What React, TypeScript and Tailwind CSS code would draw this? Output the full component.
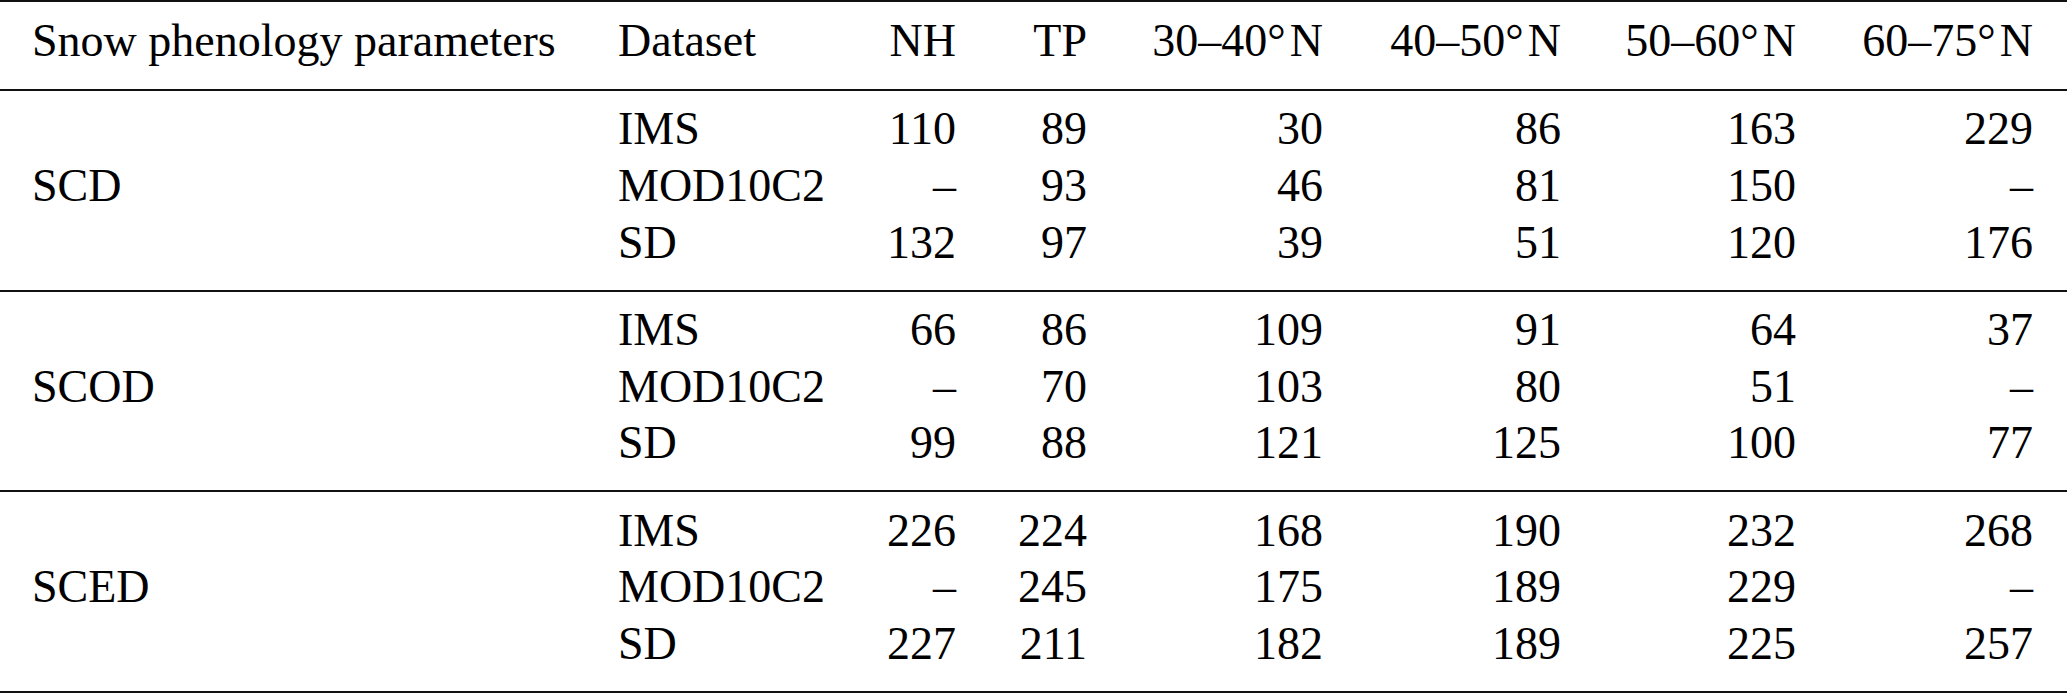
import { Fragment } from "react";

type Row = { ds: string; v: string[] };
type Section = { label: string; rows: Row[] };

const sections: Section[] = [
  {
    label: "SCD",
    rows: [
      { ds: "IMS", v: ["110", "89", "30", "86", "163", "229"] },
      { ds: "MOD10C2", v: ["–", "93", "46", "81", "150", "–"] },
      { ds: "SD", v: ["132", "97", "39", "51", "120", "176"] },
    ],
  },
  {
    label: "SCOD",
    rows: [
      { ds: "IMS", v: ["66", "86", "109", "91", "64", "37"] },
      { ds: "MOD10C2", v: ["–", "70", "103", "80", "51", "–"] },
      { ds: "SD", v: ["99", "88", "121", "125", "100", "77"] },
    ],
  },
  {
    label: "SCED",
    rows: [
      { ds: "IMS", v: ["226", "224", "168", "190", "232", "268"] },
      { ds: "MOD10C2", v: ["–", "245", "175", "189", "229", "–"] },
      { ds: "SD", v: ["227", "211", "182", "189", "225", "257"] },
    ],
  },
];

function Cell({ children, right, extra }: { children: React.ReactNode; right?: boolean; extra?: string }) {
  return (
    <div
      className={`font-['Liberation_Serif',serif] text-[46px] leading-[56.7px] text-black whitespace-nowrap ${
        right ? "text-right" : "text-left"
      } ${extra ?? ""}`}
    >
      {children}
    </div>
  );
}

function Lat({ a }: { a: string }) {
  return (
    <span className="whitespace-nowrap">
      {a}°<span className="ml-[4px]">N</span>
    </span>
  );
}

export default function App() {
  return (
    <div className="w-[2067px] h-[693px] bg-white text-black font-['Liberation_Serif',serif] text-[46px] leading-[56.7px] border-t-2 border-[#111] overflow-hidden">
      <div className="grid grid-cols-[586px_220px_118px_131px_236px_238px_235px_237px] pl-[32px] pr-[34px] pt-[10.8px] pb-[19.5px] border-b-2 border-[#111]">
        <Cell>Snow phenology parameters</Cell>
        <Cell>Dataset</Cell>
        <Cell right>NH</Cell>
        <Cell right>TP</Cell>
        <Cell right>
          <Lat a="30–40" />
        </Cell>
        <Cell right>
          <Lat a="40–50" />
        </Cell>
        <Cell right>
          <Lat a="50–60" />
        </Cell>
        <Cell right>
          <Lat a="60–75" />
        </Cell>
      </div>
      {sections.map((s) => (
        <div
          key={s.label}
          className="grid grid-cols-[586px_220px_118px_131px_236px_238px_235px_237px] grid-rows-3 pl-[32px] pr-[34px] pt-[10.4px] pb-[18.2px] border-b-2 border-[#111]"
        >
          <Cell extra="row-span-3 self-center">{s.label}</Cell>
          {s.rows.map((r) => (
            <Fragment key={r.ds}>
              <Cell extra="col-start-2">{r.ds}</Cell>
              {r.v.map((x, i) => (
                <Cell key={i} right>
                  {x}
                </Cell>
              ))}
            </Fragment>
          ))}
        </div>
      ))}
    </div>
  );
}
